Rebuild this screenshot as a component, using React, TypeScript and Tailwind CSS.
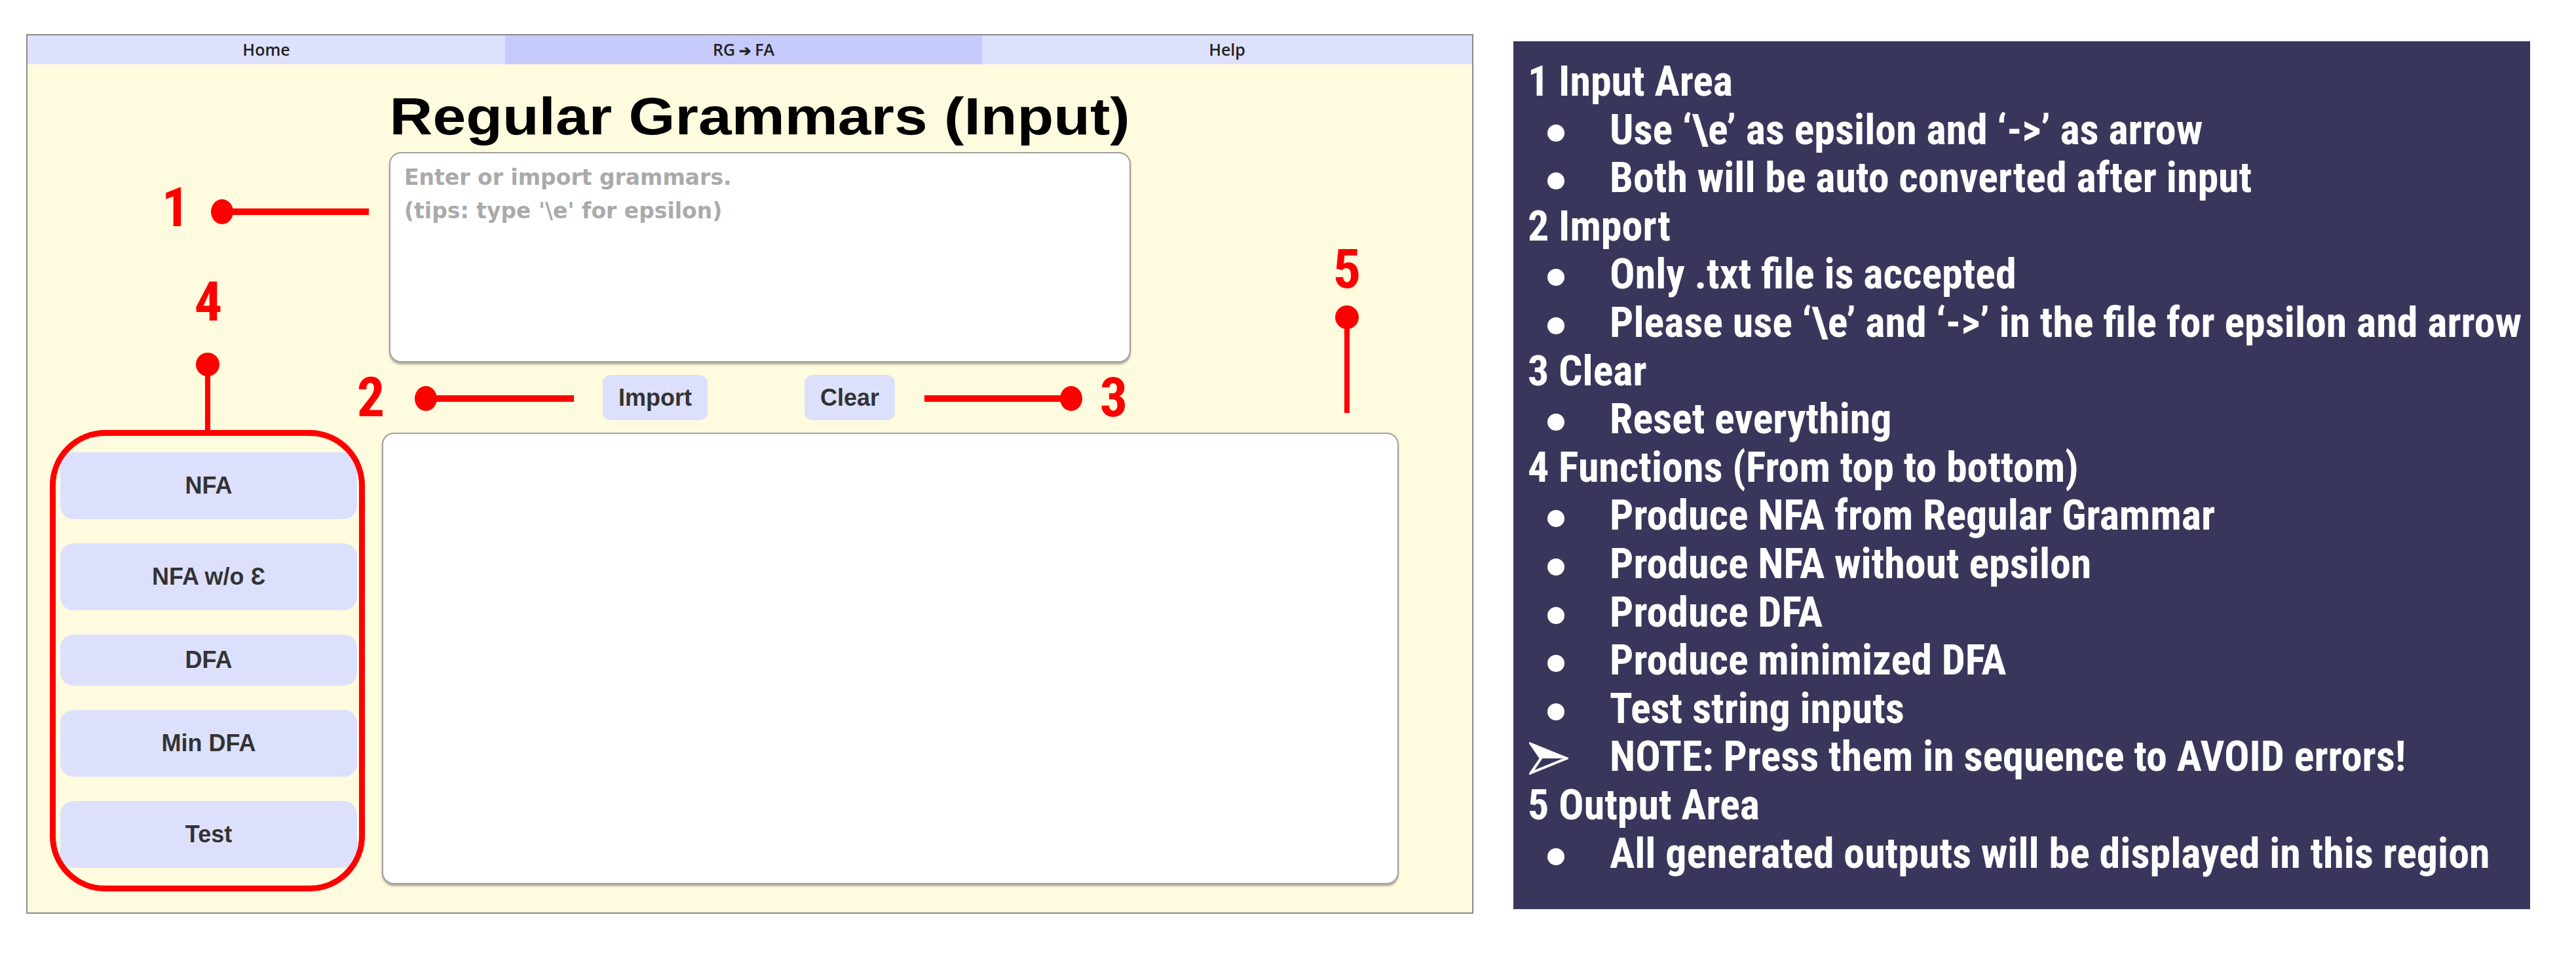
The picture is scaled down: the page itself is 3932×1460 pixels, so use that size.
import React from "react";

const arial = "[font-family:'Liberation_Sans',Arial,sans-serif]";

type Line = { kind: "h" | "b" | "a"; text: string };

const lines: Line[] = [
  { kind: "h", text: "1 Input Area" },
  { kind: "b", text: "Use \u2018\\e\u2019 as epsilon and \u2018->\u2019 as arrow" },
  { kind: "b", text: "Both will be auto converted after input" },
  { kind: "h", text: "2 Import" },
  { kind: "b", text: "Only .txt file is accepted" },
  { kind: "b", text: "Please use \u2018\\e\u2019 and \u2018->\u2019 in the file for epsilon and arrow" },
  { kind: "h", text: "3 Clear" },
  { kind: "b", text: "Reset everything" },
  { kind: "h", text: "4 Functions (From top to bottom)" },
  { kind: "b", text: "Produce NFA from Regular Grammar" },
  { kind: "b", text: "Produce NFA without epsilon" },
  { kind: "b", text: "Produce DFA" },
  { kind: "b", text: "Produce minimized DFA" },
  { kind: "b", text: "Test string inputs" },
  { kind: "a", text: "NOTE: Press them in sequence to AVOID errors!" },
  { kind: "h", text: "5 Output Area" },
  { kind: "b", text: "All generated outputs will be displayed in this region" },
];

const funcButtons = [
  { label: "NFA", h: "h-[102px]" },
  { label: "NFA w/o \u0190", h: "h-[102px]" },
  { label: "DFA", h: "h-[78px]" },
  { label: "Min DFA", h: "h-[102px]" },
  { label: "Test", h: "h-[102px]" },
];

function LeftPanel() {
  return (
    <div className="ml-[40px] mt-[52px] w-[2209px] h-[1342px] shrink-0 border-2 border-[#8a8a8a] bg-[#fffbdf] flex flex-col">
      <nav className="grid grid-cols-[729px_728px_1fr] h-[44px] shrink-0 text-[25px] font-semibold text-[#222] [font-family:'Open_Sans',sans-serif]">
        <div className="bg-[#dee1fd] flex items-center justify-center">Home</div>
        <div className="bg-[#c6cafa] flex items-center justify-center">RG <span className="mx-[6px] text-[22px]">{"\u2794"}</span> FA</div>
        <div className="bg-[#dee1fd] flex items-center justify-center">Help</div>
      </nav>

      <div className="ml-[552px] w-[1132px] flex flex-col">
        <h1 className={`mt-[42px] h-[76px] text-[80px] leading-[76px] font-bold text-black text-center whitespace-nowrap ${arial}`}>
          <span className="inline-block scale-x-[1.14]">Regular Grammars (Input)</span>
        </h1>
        <textarea
          className="mt-[16px] w-[1132px] h-[321px] resize-none rounded-[18px] border-2 border-[#a0a0a0] bg-white px-[21px] py-[11px] text-[33px] leading-[51px] font-bold text-[#333] placeholder:text-[#aaaaaa] shadow-[0_3px_3px_rgba(0,0,0,0.3)] outline-none [font-family:'DejaVu_Sans',sans-serif]"
          placeholder={"Enter or import grammars.\n(tips: type '\\e' for epsilon)"}
        />
        <div className={`mt-[19px] flex pl-[326px] gap-[148px] ${arial}`}>
          <button className="h-[69px] px-[24px] rounded-[12px] bg-[#dde0fc] text-[36px] font-bold text-[#333]">Import</button>
          <button className="h-[69px] px-[24px] rounded-[12px] bg-[#dde0fc] text-[36px] font-bold text-[#333]">Clear</button>
        </div>
      </div>

      <div className="mt-[19px] flex items-start">
        <div className={`ml-[50px] w-[453px] pt-[30px] flex flex-col gap-[37px] ${arial}`}>
          {funcButtons.map((b) => (
            <button
              key={b.label}
              className={`${b.h} w-full rounded-[20px] bg-[#dde0fc] text-[36px] font-bold text-[#333] flex items-center justify-center`}
            >
              {b.label}
            </button>
          ))}
        </div>
        <div className="ml-[38px] w-[1552px] h-[689px] rounded-[18px] border-2 border-[#a0a0a0] bg-white shadow-[0_3px_3px_rgba(0,0,0,0.3)]" />
      </div>
    </div>
  );
}

function Arrowhead() {
  return (
    <svg width="60" height="50" viewBox="0 0 60 50" className="mt-[14px]">
      <polygon points="3,3 57,25 3,47 18,25" fill="#38375b" stroke="#ffffff" strokeWidth="4" strokeLinejoin="miter" />
      <polygon points="3,3 57,25 18,25" fill="#ffffff" />
    </svg>
  );
}

function RightPanel() {
  return (
    <div className="ml-[61px] mt-[63px] w-[1552px] h-[1324px] shrink-0 bg-[#38375b] pt-[25px] pl-[22px] text-white font-bold text-[64px] leading-[73.6px] [font-family:'Roboto_Condensed','Noto_Sans',sans-serif] [font-stretch:condensed]">
      {lines.map((l, i) => {
        if (l.kind === "h") {
          return (
            <div key={i} className="h-[73.6px] whitespace-nowrap">
              {l.text}
            </div>
          );
        }
        return (
          <div key={i} className="h-[73.6px] flex whitespace-nowrap">
            <div className="w-[125px] shrink-0 flex">
              {l.kind === "b" ? (
                <span className="ml-[30px] mt-[28px] w-[26px] h-[26px] rounded-full bg-white" />
              ) : (
                <span className="ml-[2px]">
                  <Arrowhead />
                </span>
              )}
            </div>
            <span>{l.text}</span>
          </div>
        );
      })}
    </div>
  );
}

function Annotations() {
  const red = "#ff0000";
  const numFont = "'Liberation Sans Narrow', 'Roboto Condensed', 'DejaVu Sans Condensed', sans-serif";
  const num = (x: number, y: number, t: string) => (
    <text x={x} y={y} textAnchor="middle" fill={red} fontSize={84} fontWeight={700} fontFamily={numFont}>
      {t}
    </text>
  );
  return (
    <svg className="absolute left-0 top-0 pointer-events-none" width={3932} height={1460} viewBox="0 0 3932 1460">
      {num(268, 345, "1")}
      <ellipse cx={339} cy={323} rx={17} ry={19} fill={red} />
      <line x1={339} y1={323} x2={563} y2={323} stroke={red} strokeWidth={10} />

      {num(318, 489, "4")}
      <ellipse cx={317} cy={556} rx={18} ry={18} fill={red} />
      <line x1={317} y1={556} x2={317} y2={660} stroke={red} strokeWidth={8} />
      <rect x={80.5} y={660.5} width={472} height={695} rx={80} ry={80} fill="none" stroke={red} strokeWidth={9} />

      {num(566, 635, "2")}
      <ellipse cx={650} cy={608} rx={17} ry={19} fill={red} />
      <line x1={650} y1={608} x2={876} y2={608} stroke={red} strokeWidth={10} />

      {num(1700, 635, "3")}
      <ellipse cx={1635} cy={608} rx={17} ry={19} fill={red} />
      <line x1={1411} y1={608} x2={1635} y2={608} stroke={red} strokeWidth={10} />

      {num(2056, 439, "5")}
      <ellipse cx={2056} cy={484} rx={18} ry={18} fill={red} />
      <line x1={2056} y1={484} x2={2056} y2={630} stroke={red} strokeWidth={8} />
    </svg>
  );
}

export default function App() {
  return (
    <div className="relative w-[3932px] h-[1460px] bg-white flex items-start overflow-hidden">
      <LeftPanel />
      <RightPanel />
      <Annotations />
    </div>
  );
}
